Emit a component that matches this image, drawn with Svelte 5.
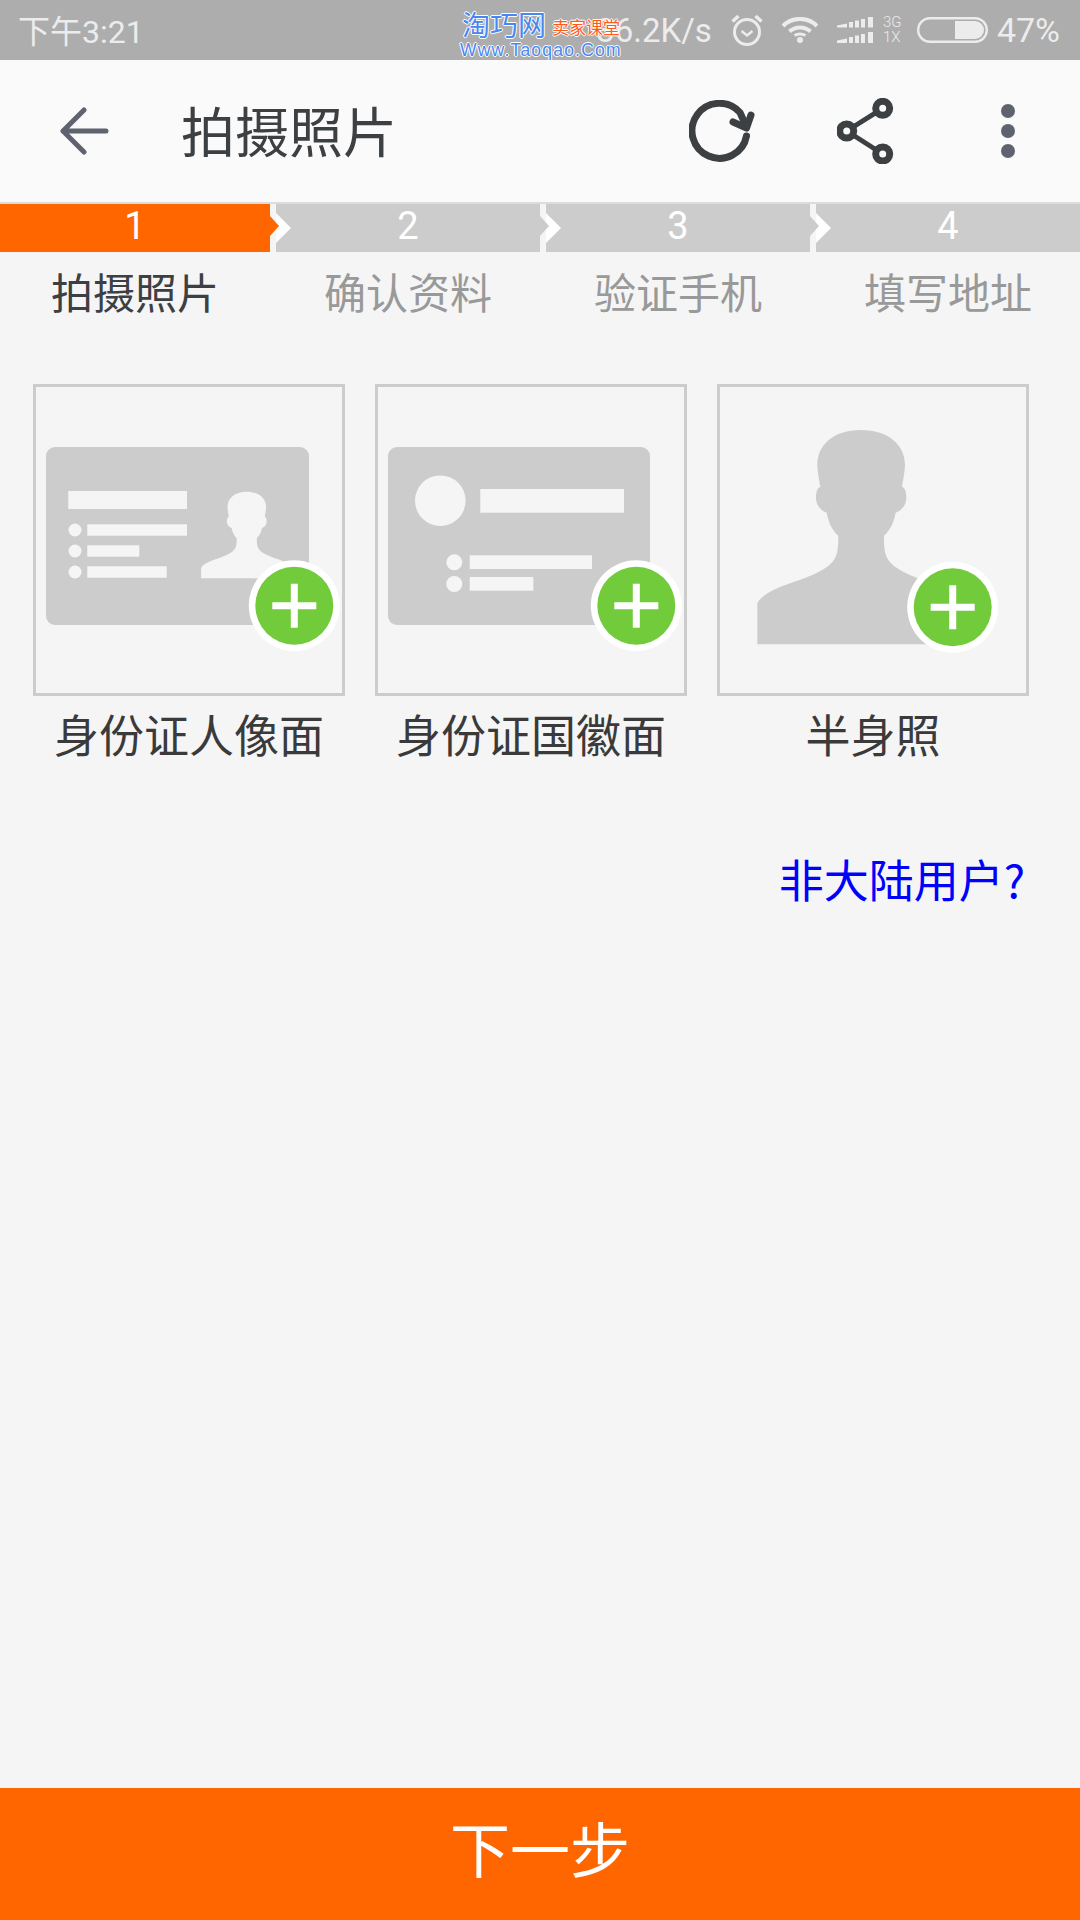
<script lang="ts">
  const steps = [
    { n: 1, label: "拍摄照片" },
    { n: 2, label: "确认资料" },
    { n: 3, label: "验证手机" },
    { n: 4, label: "填写地址" },
  ];
  let current = 1;

  // silhouette traced for the large tile, bottom differs on the small card
  const person = (b: number) =>
    `M483 180C566 180 615 225 615 285C615 300 609 335 606 350C617 355 619 370 619 385C619 405 607 420 587 428C582 455 572 480 552 497C552 520 552 545 562 565C582 600 637 620 697 640C747 658 782 675 795 700L795 ${b}L172 ${b}L172 700C185 675 220 658 270 640C330 620 385 600 405 565C415 545 415 520 415 497C395 480 385 455 380 428C360 420 348 405 348 385C348 370 350 355 361 350C358 335 352 300 352 285C352 225 400 180 483 180Z`;
</script>

{#snippet plus(cx: number, cy: number)}
  <circle {cx} {cy} r="45.5" fill="#fff" />
  <circle {cx} {cy} r="39" fill="#72cb3a" />
  <path d="M{cx - 22} {cy}H{cx + 22}M{cx} {cy - 22}V{cy + 22}" stroke="#fff" stroke-width="7" />
{/snippet}

<div class="page">
  <div class="status">
    <span class="time">下午3:21</span>
    <div class="watermark">
      <span class="wm-name">淘巧网</span>
      <span class="wm-course">卖家课堂</span>
      <span class="wm-url">Www.Taoqao.Com</span>
    </div>
    <div class="status-right">
      <span class="speed">36.2K/s</span>
      <svg class="alarm" width="32" height="32" viewBox="0 0 32 32" fill="none" stroke="#ececec">
        <circle cx="16" cy="18" r="12.5" stroke-width="3" />
        <path d="M10.5 17l5.5 4.5 5.5-4.5" stroke-width="2.5" />
        <path d="M1.5 7.5l6-5.5M30.5 7.5l-6-5.5" stroke-width="3.5" />
      </svg>
      <svg class="wifi" width="38" height="26" viewBox="0 0 38 26" fill="none" stroke="#ececec" stroke-width="4">
        <path d="M2 9C11-.5 27-.5 36 9" />
        <path d="M8.5 14.5C14 9 24 9 29.5 14.5" />
        <circle cx="19" cy="23" r="3" fill="#ececec" stroke="none" />
        <path d="M13.5 18.5c3-2 8-2 11 0" stroke-width="3" />
      </svg>
      <svg class="signal" width="38" height="26" viewBox="0 0 38 26" fill="#ececec">
        <path d="M0 8.500L10 6.500V10.500H0ZM12 5H16V10.500H12ZM18 3.500H22V10.500H18ZM24 2H28V10.500H24ZM31 0H36V10.500H31Z" />
        <path d="M0 23.500L10 21.500V26H0ZM12 20H16V26H12ZM18 18.500H22V26H18ZM24 17H28V26H24ZM31 15H36V26H31Z" />
      </svg>
      <div class="net"><span>3G</span><span>1X</span></div>
      <svg class="battery" width="71" height="26" viewBox="0 0 71 26" fill="none">
        <rect x="1.200" y="1.200" width="68.600" height="23.600" rx="11.800" stroke="#ececec" stroke-width="2.400" />
        <path d="M38 4H58a9 9 0 0 1 0 18H38Z" fill="#ececec" />
      </svg>
      <span class="pct">47%</span>
    </div>
  </div>

  <header class="appbar">
    <svg class="back" width="50" height="48" viewBox="0 0 50 48" fill="none" stroke="#5f6370" stroke-width="5" stroke-linecap="round" stroke-linejoin="round">
      <path d="M24 3L3 24L24 45M3 24H46" />
    </svg>
    <h1>拍摄照片</h1>
    <svg class="refresh" width="66" height="62" viewBox="0 0 66 62" fill="none" stroke="#3c4043" stroke-width="7" stroke-linecap="round" stroke-linejoin="round">
      <path d="M57.500 36A27.500 27.500 0 1 1 51 12.500L57 26" />
      <path d="M44 22L57.500 28L62 15" />
    </svg>
    <svg class="share" width="58" height="66" viewBox="0 0 58 66" fill="none" stroke="#3c4043">
      <path d="M9.700 33L45.700 10.300M9.700 33L45.700 56" stroke-width="5" />
      <circle cx="9.700" cy="33" r="7" stroke-width="7" fill="#fafafa" />
      <circle cx="45.700" cy="10.300" r="7" stroke-width="7" fill="#fafafa" />
      <circle cx="45.700" cy="56" r="7" stroke-width="7" fill="#fafafa" />
    </svg>
    <svg class="more" width="16" height="56" viewBox="0 0 16 56" fill="#5f6370">
      <circle cx="8" cy="8" r="7" />
      <circle cx="8" cy="28" r="7" />
      <circle cx="8" cy="48" r="7" />
    </svg>
  </header>

  <div class="steps">
    {#each steps as step}
      <div class="step" class:active={step.n === current} class:first={step.n === 1}>
        <div class="step-bar">{step.n}</div>
        {#if step.n < steps.length}<span class="tip"></span>{/if}
        <div class="step-label">{step.label}</div>
      </div>
    {/each}
  </div>

  <div class="tiles">
    <div class="tile">
      <div class="frame">
        <svg width="306" height="306" viewBox="0 0 306 306">
          <rect x="10" y="60" width="263" height="178" rx="9" fill="#ccc" />
          <g fill="#f5f5f5">
            <rect x="32.300" y="104" width="118.700" height="18" />
            <circle cx="39" cy="143" r="6.500" />
            <rect x="51.300" y="137.300" width="99.700" height="11.400" />
            <circle cx="39" cy="164" r="6.500" />
            <rect x="51.300" y="158.300" width="52" height="11.400" />
            <circle cx="39" cy="185" r="6.500" />
            <rect x="51.300" y="179.300" width="79.400" height="11.400" />
            <path transform="translate(139.850 78.300) scale(.1467)" d={person(770)} />
          </g>
          {@render plus(258.300, 218.700)}
        </svg>
      </div>
      <div class="caption">身份证人像面</div>
    </div>

    <div class="tile">
      <div class="frame">
        <svg width="306" height="306" viewBox="0 0 306 306">
          <rect x="10" y="60" width="262" height="178" rx="9" fill="#ccc" />
          <g fill="#f5f5f5">
            <circle cx="62.300" cy="113.700" r="25.300" />
            <rect x="102.300" y="102" width="143.700" height="23.700" />
            <circle cx="76.300" cy="175.300" r="8" />
            <rect x="91.700" y="168.300" width="122.300" height="13.700" />
            <circle cx="76.300" cy="197" r="8" />
            <rect x="91.700" y="190" width="63.600" height="13.700" />
          </g>
          {@render plus(258.300, 218.700)}
        </svg>
      </div>
      <div class="caption">身份证国徽面</div>
    </div>

    <div class="tile">
      <div class="frame">
        <svg width="306" height="306" viewBox="0 0 306 306">
          <path transform="translate(-20 -17) scale(.3333)" fill="#ccc" d={person(823)} />
          {@render plus(232.700, 220.300)}
        </svg>
      </div>
      <div class="caption">半身照</div>
    </div>
  </div>

  <div class="foreign"><span>非大陆用户?</span></div>

  <div class="spacer"></div>

  <button class="next">下一步</button>
</div>

<style>
  :global(body) {
    margin: 0;
    background: #f5f5f5;
  }
  .page {
    width: 1080px;
    height: 1920px;
    display: flex;
    flex-direction: column;
    background: #f5f5f5;
    font-family: "Noto Sans CJK SC", "Noto Sans", sans-serif;
    overflow: hidden;
  }

  .status {
    position: relative;
    height: 60px;
    flex: none;
    display: flex;
    align-items: center;
    justify-content: space-between;
    padding: 0 20px 0 18px;
    background: #adadad;
    color: #ececec;
    font-family: Roboto, "Noto Sans CJK SC", sans-serif;
    font-weight: 400;
  }
  .time {
    font-size: 32px;
    margin-top: -3px;
  }
  .status-right {
    display: flex;
    align-items: center;
  }
  .speed {
    font-size: 33px;
  }
  .pct {
    font-size: 34px;
    margin-left: 9px;
  }
  .alarm {
    margin-left: 19px;
  }
  .wifi,
  .signal {
    margin-left: 18px;
  }
  .net {
    display: flex;
    flex-direction: column;
    margin-left: 8px;
    width: 20px;
    font-size: 15px;
    font-weight: 300;
    line-height: 15px;
  }
  .battery {
    margin-left: 14px;
  }

  .watermark {
    position: absolute;
    left: 460px;
    top: 0;
    width: 170px;
    height: 60px;
  }
  .watermark span {
    position: absolute;
    white-space: nowrap;
    text-shadow: -1px 0 #fff, 1px 0 #fff, 0 -1px #fff, 0 1px #fff;
  }
  .wm-name {
    left: 2px;
    top: 5px;
    font-size: 28px;
    line-height: 38px;
    color: #4a86f0;
    font-family: "Noto Sans CJK SC", sans-serif;
    font-weight: 400;
  }
  .wm-course {
    left: 92px;
    top: 15px;
    font-size: 17px;
    line-height: 24px;
    color: #ff5a1a;
    font-family: "Noto Sans CJK SC", sans-serif;
    font-weight: 400;
  }
  .wm-url {
    left: 0;
    top: 41px;
    font-size: 17.500px;
    line-height: 18px;
    letter-spacing: 1.2px;
    color: #4a86f0;
    font-family: "Liberation Sans", sans-serif;
    font-weight: 400;
  }

  .appbar {
    height: 142px;
    flex: none;
    display: flex;
    align-items: center;
    background: #fafafa;
    border-bottom: 2px solid #dcdcdc;
  }
  .back {
    margin-left: 60px;
  }
  h1 {
    margin: -4px 0 0 71px;
    font-size: 54px;
    font-weight: 400;
    color: #3c4043;
    flex: 1;
  }
  .share {
    margin-left: 82px;
  }
  .more {
    margin-left: 105px;
    margin-right: 64px;
  }

  .steps {
    display: flex;
    flex: none;
  }
  .step {
    position: relative;
    width: 270px;
    text-align: center;
  }
  .step-bar {
    height: 48px;
    margin-left: 6px;
    background: #ccc;
    color: #fff;
    font-family: Roboto, sans-serif;
    font-weight: 400;
    font-size: 38px;
    line-height: 44px;
    position: relative;
  }
  .step.first .step-bar {
    margin-left: 0;
  }
  .step.active .step-bar {
    background: #ff6600;
  }
  .step:not(.first) .step-bar::before {
    content: "";
    position: absolute;
    left: 0;
    top: 9px;
    border-left: 15px solid #fff;
    border-top: 15px solid transparent;
    border-bottom: 15px solid transparent;
  }
  /* previous step's point, sits over the white chevron of the next one */
  .tip {
    position: absolute;
    left: 100%;
    top: 12px;
    z-index: 1;
    border-left: 9px solid #ccc;
    border-top: 10px solid transparent;
    border-bottom: 10px solid transparent;
  }
  .step.active .tip {
    border-left-color: #ff6600;
  }
  .step-label {
    margin-top: 10px;
    padding-left: 6px;
    font-size: 42px;
    line-height: 58px;
    color: #999;
  }
  .step.first .step-label {
    padding-left: 0;
  }
  .step.active .step-label {
    color: #3c4043;
  }

  .tiles {
    display: flex;
    gap: 30px;
    flex: none;
    margin: 64px 0 0 33px;
  }
  .tile {
    width: 312px;
  }
  .frame {
    width: 312px;
    height: 312px;
    box-sizing: border-box;
    border: 3px solid #ccc;
  }
  .frame svg {
    display: block;
  }
  .caption {
    margin-top: 8px;
    text-align: center;
    font-size: 45px;
    line-height: 60px;
    color: #3a3a3a;
  }

  .foreign {
    flex: none;
    display: flex;
    justify-content: flex-end;
    margin-top: 85px;
    padding-right: 55px;
    font-size: 45px;
    line-height: 60px;
    color: #0000ff;
  }

  .spacer {
    flex: 1;
  }

  .next {
    height: 132px;
    flex: none;
    border: 0;
    padding: 0 0 16px;
    background: #ff6600;
    color: #fff;
    font: inherit;
    font-size: 60px;
  }
</style>
